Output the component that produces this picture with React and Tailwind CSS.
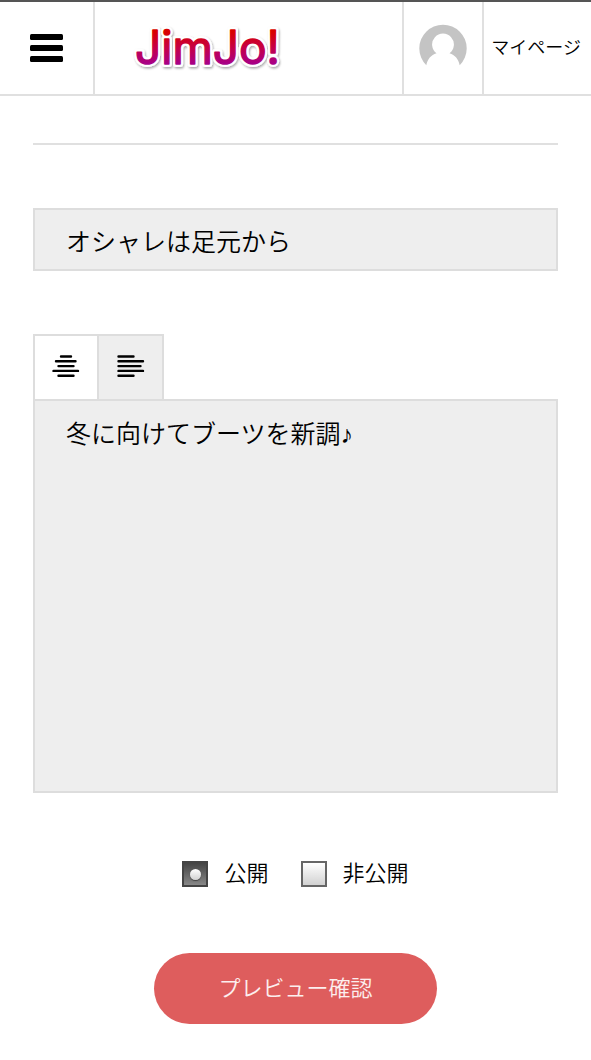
import { useState } from 'react';

function Logo() {
  return (
    <svg width="170" height="56" viewBox="0 0 170 56" role="img" aria-label="JimJo!" className="overflow-visible">
      <defs>
        <linearGradient id="logoFill" gradientUnits="userSpaceOnUse" x1="0" y1="12" x2="0" y2="45">
          <stop offset="0" stopColor="#d90000" />
          <stop offset="0.5" stopColor="#c4004a" />
          <stop offset="1" stopColor="#a5008c" />
        </linearGradient>
        <filter id="logoShadow" x="-10%" y="-20%" width="120%" height="150%">
          <feDropShadow dx="1" dy="1.5" stdDeviation="1.2" floodColor="#000" floodOpacity="0.35" />
        </filter>
      </defs>
      <g fontFamily="Inter, sans-serif" fontSize="46" fontWeight="400" strokeLinejoin="round">
        <text x="8" y="44" fill="#fff" stroke="#fff" strokeWidth="6" filter="url(#logoShadow)" aria-hidden="true">
          JimJo!
        </text>
        <text x="8" y="44" fill="url(#logoFill)" stroke="url(#logoFill)" strokeWidth="1.5">
          JimJo!
        </text>
      </g>
    </svg>
  );
}

function MenuIcon() {
  return (
    <svg width="33" height="28" viewBox="0 0 33 28" aria-hidden="true">
      <rect x="0" y="0" width="33" height="6" rx="1.5" />
      <rect x="0" y="11" width="33" height="6" rx="1.5" />
      <rect x="0" y="22" width="33" height="6" rx="1.5" />
    </svg>
  );
}

function Avatar() {
  return (
    <svg width="48" height="48" viewBox="0 0 48 48" fill="#c4c4c4" aria-hidden="true">
      <path
        fillRule="evenodd"
        d="M7.300 41.200A23.700 23.700 0 1 1 40.700 41.200C39.500 35 36 31 30.500 29.200A10.900 10.900 0 1 0 17.500 29.200C12 31 8.500 35 7.300 41.200Z"
      />
    </svg>
  );
}

function AlignCenterIcon() {
  return (
    <svg width="28" height="28" viewBox="0 0 28 28" stroke="#000" strokeWidth="2.4" strokeLinecap="round" aria-hidden="true">
      <path d="M9 2.500h10M4 7.300h19.500M6.500 12.100h15M1.500 16.900h24.500M6.500 21.700h15" />
    </svg>
  );
}

function AlignLeftIcon() {
  return (
    <svg width="28" height="28" viewBox="0 0 28 28" stroke="#000" strokeWidth="2.4" strokeLinecap="round" aria-hidden="true">
      <path d="M1.500 2.500h15M1.500 7.300h24.500M1.500 12.100h22M1.500 16.900h24.500M1.500 21.700h15" />
    </svg>
  );
}

function StatusOption({ value, label, status, onChange }) {
  return (
    <label className="flex items-center gap-4">
      <span className="relative flex">
        <input
          type="radio"
          name="status"
          value={value}
          checked={status === value}
          onChange={() => onChange(value)}
          className="peer size-[26px] appearance-none border-2 border-[#666] bg-linear-to-b from-white to-[#d2d2d2] checked:border-[#444] checked:from-[#444] checked:to-[#888]"
        />
        <span className="pointer-events-none absolute inset-0 m-auto hidden size-[11px] rounded-full bg-linear-to-b from-white to-[#d2d2d2] shadow-[0_1px_1px_#444] peer-checked:block" />
      </span>
      {label}
    </label>
  );
}

export default function App() {
  const [title, setTitle] = useState('オシャレは足元から');
  const [body, setBody] = useState('冬に向けてブーツを新調♪');
  const [status, setStatus] = useState('public');

  return (
    <div className="min-h-screen bg-white font-['Liberation_Sans','Noto_Sans_CJK_JP',sans-serif] font-[350] text-black">
      {/* Header */}
      <header className="flex h-24 border-t-2 border-b-2 border-t-[#555] border-b-[#e0e0e0]">
        <button type="button" aria-label="メニュー" className="flex w-[95px] items-center justify-center border-r-2 border-[#e0e0e0]">
          <MenuIcon />
        </button>
        <a href="#" className="flex flex-1 items-center pl-8">
          <Logo />
        </a>
        <a href="#" aria-label="プロフィール" className="flex w-[82px] items-center justify-center border-x-2 border-[#e0e0e0]">
          <Avatar />
        </a>
        <a href="#" className="flex items-center pr-[10px] pl-[7px] text-[18px] whitespace-nowrap">
          マイページ
        </a>
      </header>

      {/* Post form */}
      <form className="px-[33px] pt-[47px]" onSubmit={(e) => e.preventDefault()}>
        <hr className="border-t-2 border-[#e0e0e0]" />

        <input
          type="text"
          aria-label="タイトル"
          value={title}
          onChange={(e) => setTitle(e.target.value)}
          className="mt-[63px] block h-[63px] w-full border-2 border-[#ddd] bg-[#eee] px-[31px] text-[25px] outline-none"
        />

        <div className="mt-[63px] flex">
          <button type="button" aria-label="中央揃え" className="flex h-[65px] w-[66px] items-center justify-center border-2 border-b-0 border-[#ddd] bg-white">
            <AlignCenterIcon />
          </button>
          <button type="button" aria-label="左揃え" className="flex h-[65px] w-[65px] items-center justify-center border-t-2 border-r-2 border-[#ddd] bg-[#eee]">
            <AlignLeftIcon />
          </button>
        </div>
        <textarea
          aria-label="本文"
          value={body}
          onChange={(e) => setBody(e.target.value)}
          className="block h-[394px] w-full resize-none border-2 border-[#ddd] bg-[#eee] px-[31px] py-4 text-[25px] leading-[34px] outline-none"
        />

        <div className="mt-16 flex justify-center gap-8 text-[22px] leading-[34px]">
          <StatusOption value="public" label="公開" status={status} onChange={setStatus} />
          <StatusOption value="private" label="非公開" status={status} onChange={setStatus} />
        </div>

        <button type="submit" className="mx-auto mt-[62px] mb-9 block h-[71px] w-[283px] rounded-full bg-[#de5d5d] text-[22px] text-white/90">
          プレビュー確認
        </button>
      </form>
    </div>
  );
}
